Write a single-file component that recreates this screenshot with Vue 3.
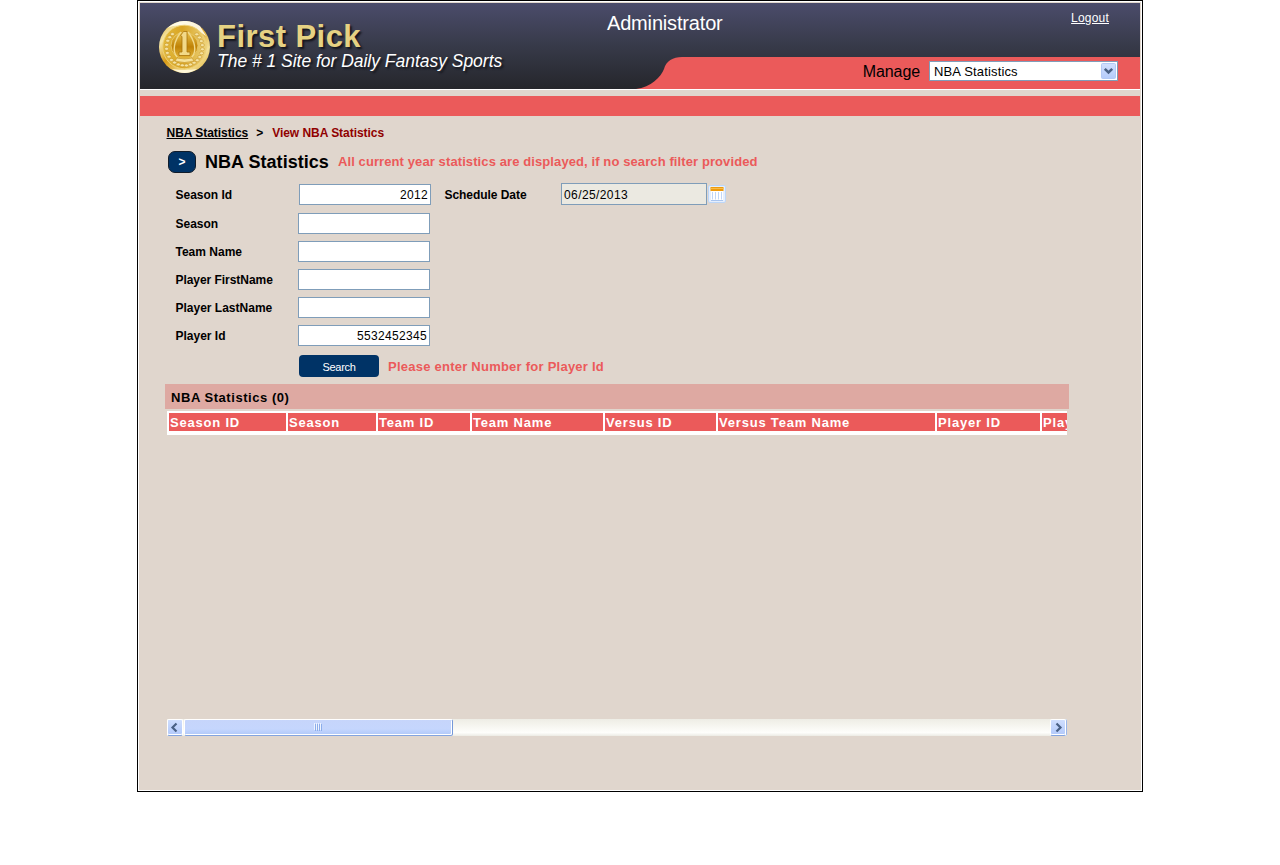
<script setup>
const fields = [
  { label: 'Season', value: '' },
  { label: 'Team Name', value: '' },
  { label: 'Player FirstName', value: '', cls: 'first' },
  { label: 'Player LastName', value: '' },
  { label: 'Player Id', value: '5532452345' },
]
const columns = [
  { name: 'Season ID', width: 117 },
  { name: 'Season', width: 88 },
  { name: 'Team ID', width: 92 },
  { name: 'Team Name', width: 131 },
  { name: 'Versus ID', width: 111 },
  { name: 'Versus Team Name', width: 217 },
  { name: 'Player ID', width: 103 },
  { name: 'Player Name', width: 120 },
]
const leaves = Array.from({ length: 22 }, (_, i) => {
  const a = ((i * 13.1 - 47) * Math.PI) / 180
  return { x: 25.5 + 18 * Math.cos(a), y: 26.5 + 18 * Math.sin(a) }
})
</script>

<template>
  <div class="page">
    <header class="banner">
      <svg class="art" width="1000" height="86" viewBox="0 0 1000 86">
        <defs>
          <linearGradient id="night" x1="0" y1="0" x2="0" y2="1">
            <stop offset="0" stop-color="#4b4c6b" />
            <stop offset=".5" stop-color="#373a49" />
            <stop offset="1" stop-color="#25262b" />
          </linearGradient>
        </defs>
        <rect width="1000" height="86" fill="url(#night)" />
        <path d="M496 86 C511 84 521 74 524 66 C526 58 533 54 542 54 H1000 V86 Z" fill="#eb5a5a" />
      </svg>
      <div class="brand">
        <svg class="coin" width="52" height="53" viewBox="0 0 52 53">
          <defs>
            <linearGradient id="rim" x1="0" y1="0" x2="1" y2="1">
              <stop offset="0" stop-color="#dba521" />
              <stop offset=".22" stop-color="#f5e7a7" />
              <stop offset=".45" stop-color="#d89b16" />
              <stop offset=".75" stop-color="#f4e198" />
              <stop offset="1" stop-color="#d9a31c" />
            </linearGradient>
            <linearGradient id="face" x1="0" y1="0" x2="1" y2="0">
              <stop offset="0" stop-color="#e3bb3d" />
              <stop offset=".45" stop-color="#d9a524" />
              <stop offset="1" stop-color="#ecd27a" />
            </linearGradient>
            <linearGradient id="core" x1="0" y1="0" x2="0" y2="1">
              <stop offset="0" stop-color="#e8c04a" />
              <stop offset=".55" stop-color="#bf8206" />
              <stop offset="1" stop-color="#e6b93e" />
            </linearGradient>
          </defs>
          <ellipse cx="25.5" cy="26" rx="25.5" ry="26" fill="url(#rim)" />
          <path d="M8 7 Q25 -6 41 5 L47 15 Q26 -1 8 7Z" fill="#fffdf0" opacity=".9" />
          <path d="M13 48 Q26 56 38 48 Q26 50 13 48Z" fill="#fff9e0" opacity=".9" />
          <circle cx="25.5" cy="26" r="21.8" fill="url(#face)" stroke="#edd179" stroke-width=".9" />
          <ellipse v-for="(b, i) in leaves" :key="i" :cx="b.x" :cy="b.y" rx="2.1" ry="1.5" fill="#f4e3a2" stroke="#c48f1c" stroke-width=".5" />
          <circle cx="25.5" cy="24.5" r="13.5" fill="url(#core)" stroke="#e6c462" stroke-width="1" />
          <path d="M22 11 C15 20 13 30 18 36 M29 11 C36 20 38 30 33 36" fill="none" stroke="#f1d98a" stroke-width="1.4" />
          <path d="M21.5 14.5 L24.5 10.5 H28 V31 H31 V34.5 H20 V31 H23 V15.5Z" fill="#f2d988" stroke="#a9740a" stroke-width=".8" />
          <path d="M18 37 Q25.5 39 33 37 L35 40 Q25.5 43 16 40Z" fill="#f6e29a" stroke="#bd8618" stroke-width=".5" />
        </svg>
        <div class="names">
          <div class="name">First Pick</div>
          <div class="tag">The # 1 Site for Daily Fantasy Sports</div>
        </div>
      </div>
      <div class="role">Administrator</div>
      <div class="tools">
        <a class="logout">Logout</a>
        <div class="manage">
          <span class="mlabel">Manage</span>
          <div class="select">
            <span>NBA Statistics</span>
            <svg width="15" height="16" viewBox="0 0 15 16">
              <defs>
                <linearGradient id="blue" x1="0" y1="0" x2="0" y2="1">
                  <stop offset="0" stop-color="#d2e0fe" />
                  <stop offset="1" stop-color="#b4cbfa" />
                </linearGradient>
              </defs>
              <rect x=".5" y=".5" width="14" height="15" rx="1" fill="url(#blue)" stroke="#b3c9f5" />
              <path d="M3.8 5.8 L7.5 9.5 L11.2 5.8" fill="none" stroke="#4a6185" stroke-width="2.5" />
            </svg>
          </div>
        </div>
      </div>
    </header>
    <div class="strip"></div>

    <main>
      <nav class="crumbs"><a>NBA Statistics</a><b>&gt;</b><span>View NBA Statistics</span></nav>
      <div class="heading">
        <div class="go">&gt;</div>
        <h1>NBA Statistics</h1>
        <p class="note">All current year statistics are displayed, if no search filter provided</p>
      </div>

      <div class="row top">
        <label>Season Id</label>
        <div class="input">2012</div>
        <label class="sched">Schedule Date</label>
        <div class="input date">06/25/2013</div>
        <svg class="cal" width="18" height="18" viewBox="0 0 18 18">
          <rect x=".5" y=".5" width="17" height="17" rx="1.5" fill="#e6effd" stroke="#bcd6f8" />
          <rect x="2.5" y="2" width="13" height="4" fill="#ee9b0e" />
          <path d="M2.5 3.5H15.5" stroke="#f7bd4c" />
          <rect x="3" y="6" width="12" height="9" fill="#fff" />
          <path d="M4.5 7V14.5M7.5 7V14.5M10.5 7V14.5M13.5 7V14.5" stroke="#c0d6f7" />
          <path d="M3 15.5H15" stroke="#a9c5ef" />
        </svg>
      </div>
      <div v-for="f in fields" :key="f.label" class="row">
        <label :class="f.cls">{{ f.label }}</label>
        <div class="input">{{ f.value }}</div>
      </div>
      <div class="actions">
        <div class="search">Search</div>
        <p class="error">Please enter Number for Player Id</p>
      </div>

      <section>
        <h2>NBA Statistics (0)</h2>
        <div class="viewport">
          <div class="thead">
            <div v-for="c in columns" :key="c.name" class="th" :style="{ width: c.width + 'px' }">{{ c.name }}</div>
          </div>
        </div>
        <div class="scroll">
          <div class="sbtn">
            <svg width="14" height="13" viewBox="0 0 14 13"><path d="M8.5 2.5 L4.5 6.5 L8.5 10.5" fill="none" stroke="#4a6185" stroke-width="2.2" /></svg>
          </div>
          <div class="thumb"><i></i><i></i><i></i><i></i></div>
          <div class="sbtn right">
            <svg width="14" height="13" viewBox="0 0 14 13"><path d="M5.5 2.5 L9.5 6.5 L5.5 10.5" fill="none" stroke="#4a6185" stroke-width="2.2" /></svg>
          </div>
        </div>
      </section>
    </main>
  </div>
</template>

<style>
body { background: #fff; }
</style>

<style scoped>
* { box-sizing: border-box; margin: 0; }
.page { width: 1006px; height: 792px; margin-left: 137px; border: 1px solid #000; padding: 2px; background: #e0d6cd; box-shadow: inset 0 0 0 1px #fff; font-family: "Liberation Sans", Arial, sans-serif; font-size: 12px; color: #000; white-space: nowrap; }
.banner { position: relative; width: 1000px; height: 87px; display: flex; border-bottom: 1px solid #fff; color: #fff; }
.art { position: absolute; left: 0; top: 0; }
.brand { position: relative; display: flex; width: 467px; padding: 18px 0 0 19px; }
.names { padding: 0 0 0 6px; }
.name { height: 31px; line-height: 31px; font-size: 31px; font-weight: bold; color: #e6d283; letter-spacing: .45px; text-shadow: 2px 2px 2px #14151c; }
.tag { height: 20px; line-height: 19px; font-size: 17.5px; letter-spacing: -.02px; font-style: italic; text-shadow: 2px 2px 2px #14151c; }
.role { position: relative; padding-top: 9px; line-height: 22px; font-size: 20px; letter-spacing: -.17px; width: 200px; }
.tools { position: relative; flex: 1; padding-right: 22px; display: flex; flex-direction: column; align-items: flex-end; }
.logout { margin: 8px 9px 0 0; font-size: 12px; letter-spacing: .2px; line-height: 14px; text-decoration: underline; }
.manage { margin-top: 36px; display: flex; color: #000; height: 20px; }
.mlabel { font-size: 16px; line-height: 21px; margin-right: 9px; letter-spacing: -.1px; }
.select { width: 189px; height: 20px; border: 1px solid #7f9db9; background: #fff; display: flex; justify-content: space-between; padding: 1px 1px 1px 4px; font-size: 13px; line-height: 17px; letter-spacing: .15px; }
.strip { height: 20px; margin-top: 6px; background: #eb5a5a; }
main { padding-left: 25px; }
.crumbs { padding: 9px 0 0 1.5px; height: 34px; line-height: 16px; font-weight: bold; letter-spacing: -.04px; }
.crumbs a { text-decoration: underline; }
.crumbs b { margin: 0 9px 0 8px; }
.crumbs span { color: #900000; }
.heading { display: flex; height: 34px; padding: 1px 0 0 3px; }
.go { width: 28px; height: 22px; border-radius: 7px; background: #003366; border: 1px solid #111c2a; color: #fff; font-weight: bold; font-size: 12px; line-height: 20px; text-align: center; }
h1 { font-size: 18px; line-height: 22px; margin-left: 9px; letter-spacing: .04px; }
.note, .error { color: #eb5a5a; font-size: 13px; font-weight: bold; }
.note { margin-left: 9px; line-height: 22px; letter-spacing: .1px; }
.row { display: flex; height: 28px; padding-left: 10.5px; }
label { width: 122.5px; line-height: 22px; font-weight: bold; }
.first { letter-spacing: -.05px; }
.input { width: 132px; height: 21px; border: 1px solid #7f9db9; background: #fff; text-align: right; padding-right: 2px; font-size: 12px; line-height: 21px; letter-spacing: .33px; }
.top { height: 29px; }
.top label { width: 123.5px; }
.top .sched { width: 116.5px; margin-left: 13.5px; letter-spacing: -.05px; }
.input.date { width: 146px; height: 22px; margin-top: -1px; background: #ebe9e1; text-align: left; padding-left: 2px; line-height: 22px; letter-spacing: .4px; }
.cal { margin: 1px 0 0 1px; }
.actions { display: flex; padding: 2px 0 0 134px; height: 31px; }
.search { width: 80px; height: 22px; border-radius: 4px; background: #003366; color: #fff; font-size: 11px; line-height: 24px; letter-spacing: -.3px; text-align: center; }
.error { margin: 1px 0 0 9px; line-height: 21px; letter-spacing: .24px; }
h2 { width: 904px; height: 25px; background: #dea9a2; padding-left: 6px; font-size: 13px; line-height: 27px; letter-spacing: .55px; }
.viewport { margin: 2px 0 0 2px; width: 900px; height: 308px; overflow: hidden; }
.thead { display: flex; gap: 2px; width: 1010px; height: 24px; background: #fff; padding: 2px 0 4px 2px; }
.th { flex: none; height: 18px; background: #eb5a5a; color: #fff; padding-left: 1px; font-weight: bold; font-size: 13px; line-height: 19px; letter-spacing: .8px; }
.scroll { margin-left: 2px; width: 900px; height: 17px; display: flex; background: linear-gradient(#eeede5, #fefefb 80%, #ecebe4); }
.sbtn { width: 16px; height: 17px; border: 1px solid #fff; border-bottom: 1px solid #83a4df; border-radius: 2px; background: linear-gradient(#cfdefe, #b2c9fa); padding-top: 1px; box-shadow: inset 0 -1px #fff; }
.sbtn svg { display: block; }
.sbtn.right { margin-left: auto; box-shadow: inset 0 -1px #fff, 1px 0 #9bb6e8; margin-right: 1px; }
.thumb { margin-left: 1px; width: 269px; height: 17px; border: 1px solid #fff; border-right-color: #7598d8; border-bottom-color: #83a4df; border-radius: 2px; background: linear-gradient(#c6d5fb, #c5d6fd 60%, #b0c8f8); box-shadow: inset -1px -1px #fff; display: flex; gap: 1px; justify-content: center; align-items: center; }
.thumb i { width: 1px; height: 7px; background: #8cadea; box-shadow: -1px -1px #edf3ff; }
</style>
